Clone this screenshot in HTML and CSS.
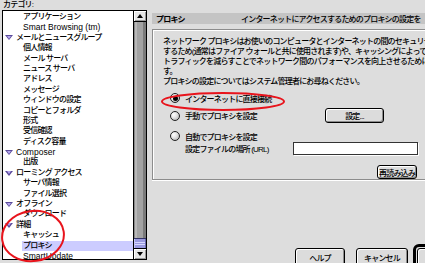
FILE: index.html
```html
<!DOCTYPE html>
<html lang="ja">
<head>
    <meta charset="UTF-8">
    <meta name="viewport" content="width=device-width, initial-scale=1.0">
    <title>プロキシ</title>
    <link rel="stylesheet" href="styles.css">
</head>
<body>
<div class="window">
    <div class="sidebar">
        <div class="sidebar-label">カテゴリ:</div>
        <div class="tree-box">
            <ul class="tree">
                <li class="item"><span>アプリケーション</span></li>
                <li class="item"><span class="latin">Smart Browsing (tm)</span></li>
                <li class="group"><i class="twisty"></i><span>メールとニュースグループ</span></li>
                <li class="item"><span>個人情報</span></li>
                <li class="item"><span>メール サーバ</span></li>
                <li class="item"><span>ニュース サーバ</span></li>
                <li class="item"><span>アドレス</span></li>
                <li class="item"><span>メッセージ</span></li>
                <li class="item"><span>ウィンドウの設定</span></li>
                <li class="item"><span>コピーとフォルダ</span></li>
                <li class="item"><span>形式</span></li>
                <li class="item"><span>受信確認</span></li>
                <li class="item"><span>ディスク容量</span></li>
                <li class="group"><i class="twisty"></i><span class="latin">Composer</span></li>
                <li class="item"><span>出版</span></li>
                <li class="group"><i class="twisty"></i><span>ローミング アクセス</span></li>
                <li class="item"><span>サーバ情報</span></li>
                <li class="item"><span>ファイル選択</span></li>
                <li class="group"><i class="twisty"></i><span>オフライン</span></li>
                <li class="item"><span>ダウンロード</span></li>
                <li class="group"><i class="twisty"></i><span>詳細</span></li>
                <li class="item"><span>キャッシュ</span></li>
                <li class="item selected"><span>プロキシ</span></li>
                <li class="item"><span class="latin">SmartUpdate</span></li>
            </ul>
            <div class="scrollbar">
                <div class="scroll-btn up"><i></i></div>
                <div class="scroll-track"><div class="scroll-thumb"></div></div>
                <div class="scroll-btn down"><i></i></div>
            </div>
        </div>
    </div>

    <div class="pane">
        <div class="pane-header">
            <span class="pane-title">プロキシ</span>
            <span class="pane-desc">インターネットにアクセスするためのプロキシの設定を</span>
        </div>
        <div class="group-box">
            <p class="intro">
                ネットワーク プロキシはお使いのコンピュータとインターネットの間のセキュリティを強化<br>
                するため(通常はファイア ウォールと共に使用されます)や、キャッシングによって<br>
                トラフィックを減らすことでネットワーク間のパフォーマンスを向上させるために使用されま<br>
                す。<br>
                プロキシの設定についてはシステム管理者にお尋ねください。
            </p>
            <div class="radio-row direct">
                <span class="radio checked"></span>
                <span class="radio-label">インターネットに直接接続</span>
            </div>
            <div class="radio-row manual">
                <span class="radio"></span>
                <span class="radio-label wide">手動でプロキシを設定</span>
                <button class="btn btn-settings">設定...</button>
            </div>
            <div class="radio-row auto">
                <span class="radio"></span>
                <span class="radio-label">自動でプロキシを設定</span>
            </div>
            <div class="url-row">
                <span class="url-label">設定ファイルの場所 (URL)</span>
                <span class="url-field"></span>
            </div>
            <div class="reload-row">
                <button class="btn btn-reload">再読み込み</button>
            </div>
        </div>
        <div class="dialog-buttons">
            <button class="btn btn-help">ヘルプ</button>
            <button class="btn btn-cancel">キャンセル</button>
            <div class="default-ring"><button class="btn btn-ok">OK</button></div>
        </div>
    </div>

    <!-- пометки красным поверх скриншота -->
    <svg class="marks" width="425" height="263" viewBox="0 0 425 263">
        <ellipse cx="33" cy="236" rx="31" ry="25" transform="rotate(-8 33 236)" />
        <ellipse cx="223" cy="101.5" rx="61" ry="8.5" />
    </svg>
</div>
</body>
</html>
```

FILE: styles.css
```css
/* Основные стили */
body {
    margin: 0;
    font-family: "Liberation Sans", "Noto Sans CJK JP", sans-serif;
    font-size: 8px;
    font-weight: 500;
    letter-spacing: -0.8px;
    color: #000;
    background-color: #dddddd;
}

.window {
    position: relative;
    display: flex;
    width: 425px;
    height: 263px;
    padding-left: 2px;
    box-sizing: border-box;
    overflow: hidden;
}

/* Дерево категорий */
.sidebar {
    flex: 0 0 145px;
    display: flex;
    flex-direction: column;
}

.sidebar-label {
    height: 10px;
    line-height: 10px;
    padding-left: 1px;
}

.tree-box {
    display: flex;
    height: 250px;
    box-sizing: border-box;
    border: 1px solid #000;
    background-color: #fff;
}

.tree {
    flex: 1;
    margin: 0;
    padding: 1px 0 0;
    list-style: none;
    overflow: hidden;
}

.tree li {
    display: flex;
    align-items: center;
    height: 10.4px;
    line-height: 10.4px;
    white-space: nowrap;
}

.tree .group {
    padding-left: 2px;
}

.tree .item {
    padding-left: 19px;
}

.tree .item span {
    flex: 1;
    padding-left: 1px;
}

.tree .item.selected span {
    background-color: #ccccff;
}

.tree .latin {
    letter-spacing: 0;
    font-size: 8.5px;
}

.twisty {
    width: 0;
    height: 0;
    margin-right: 3px;
    border-left: 4px solid transparent;
    border-right: 4px solid transparent;
    border-top: 5px solid #5a4a9a;
    position: relative;
}

.twisty::after {
    content: "";
    position: absolute;
    left: -2.5px;
    top: -4.2px;
    border-left: 2.5px solid transparent;
    border-right: 2.5px solid transparent;
    border-top: 3px solid #b4a6ee;
}

/* Полоса прокрутки */
.scrollbar {
    flex: 0 0 12px;
    display: flex;
    flex-direction: column;
    border-left: 1px solid #000;
}

.scroll-btn {
    display: flex;
    align-items: center;
    justify-content: center;
    height: 10px;
    background-color: #e6e6e6;
    box-shadow: inset 1px 1px 0 #fff, inset -1px -1px 0 #999;
}

.scroll-btn.up {
    border-bottom: 1px solid #000;
}

.scroll-btn.down {
    border-top: 1px solid #000;
}

.scroll-btn i {
    width: 0;
    height: 0;
    border-left: 3.5px solid transparent;
    border-right: 3.5px solid transparent;
}

.scroll-btn.up i {
    border-bottom: 4px solid #000;
}

.scroll-btn.down i {
    border-top: 4px solid #000;
}

.scroll-track {
    flex: 1;
    display: flex;
    flex-direction: column;
    background: linear-gradient(to right, #888 0, #888 1px, #b8b8b8 1px, #b8b8b8 3px, #a2a2a2 3px, #a2a2a2 9px, #7a7a7a 9px);
}

.scroll-thumb {
    margin-top: auto;
    height: 10px;
    box-sizing: border-box;
    border-top: 1px solid #333366;
    background: linear-gradient(#9a9ae0 0, #9a9ae0 3px, #d8d8ff 3px, #d8d8ff 4px, #9a9ae0 4px, #9a9ae0 5px, #d8d8ff 5px, #d8d8ff 6px, #9a9ae0 6px);
    box-shadow: inset 1px 0 0 #c4c4f4, inset -1px 0 0 #6a6ab0;
}

/* Правая панель */
.pane {
    flex: 0 0 300px;
    margin-left: 5px;
    padding-top: 13px;
    display: flex;
    flex-direction: column;
}

.pane-header {
    display: flex;
    align-items: center;
    height: 14px;
    background-color: #c4c4c4;
    white-space: nowrap;
}

.pane-title {
    flex: 0 0 89px;
    padding-left: 4px;
    box-sizing: border-box;
    font-weight: bold;
}

.group-box {
    margin-top: 5px;
    height: 157px;
    box-sizing: border-box;
    border: 1px solid #8c8c8c;
    border-right: none;
    box-shadow: inset 1px 1px 0 #fff, 0 1px 0 #fff;
    padding: 7px 0 0 10px;
    white-space: nowrap;
}

.intro {
    margin: 0;
    line-height: 10px;
}

.radio-row {
    display: flex;
    align-items: center;
    height: 14px;
}

.radio-row.direct {
    margin-top: 4px;
}

.radio-row.manual {
    margin-top: 3px;
    height: 15px;
}

.radio-row.auto {
    margin-top: 6px;
}

.radio {
    flex: 0 0 auto;
    width: 10px;
    height: 10px;
    margin: 0 5px 0 7px;
    box-sizing: border-box;
    border: 1px solid #222;
    border-radius: 50%;
    background: radial-gradient(circle at 35% 35%, #fff 0, #e8e8e8 35%, #a8a8a8 100%);
    position: relative;
}

.radio.checked::after {
    content: "";
    position: absolute;
    left: 1.5px;
    top: 1.5px;
    width: 5px;
    height: 5px;
    border-radius: 50%;
    background-color: #000;
}

.radio-label.wide {
    flex: 0 0 140px;
}

.url-row {
    display: flex;
    align-items: center;
    height: 13px;
    margin-top: -1px;
    padding-left: 22px;
}

.url-label {
    flex: 0 0 108px;
}

.url-field {
    width: 125px;
    height: 13px;
    box-sizing: border-box;
    border: 1px solid #333;
    background-color: #fff;
    box-shadow: 1px 1px 0 #fff;
}

.reload-row {
    margin-top: 10px;
    padding-left: 214px;
}

/* Кнопки */
.btn {
    display: flex;
    align-items: center;
    justify-content: center;
    height: 15px;
    padding: 0;
    box-sizing: border-box;
    border: 1px solid #000;
    border-radius: 3px;
    background-color: #dcdcdc;
    box-shadow: inset 1px 1px 0 #fff, inset -1px -1px 0 #8c8c8c;
    font: inherit;
    letter-spacing: inherit;
    color: #000;
}

.btn-settings {
    width: 59px;
}

.btn-reload {
    width: 40px;
    height: 14px;
}

.dialog-buttons {
    display: flex;
    align-items: flex-start;
    margin-top: 64px;
    padding-left: 143px;
}

.btn-help {
    width: 50px;
    height: 18px;
    margin-top: 4px;
}

.btn-cancel {
    width: 52px;
    height: 18px;
    margin-top: 4px;
    margin-left: 11px;
}

.default-ring {
    margin-left: 5px;
    padding: 1px;
    border: 3px solid #000;
    border-radius: 6px;
}

.btn-ok {
    width: 56px;
    height: 18px;
}

/* Красные пометки */
.marks {
    position: absolute;
    left: 0;
    top: 0;
    pointer-events: none;
}

.marks ellipse {
    fill: none;
    stroke: #e8141c;
    stroke-width: 2;
}
```
